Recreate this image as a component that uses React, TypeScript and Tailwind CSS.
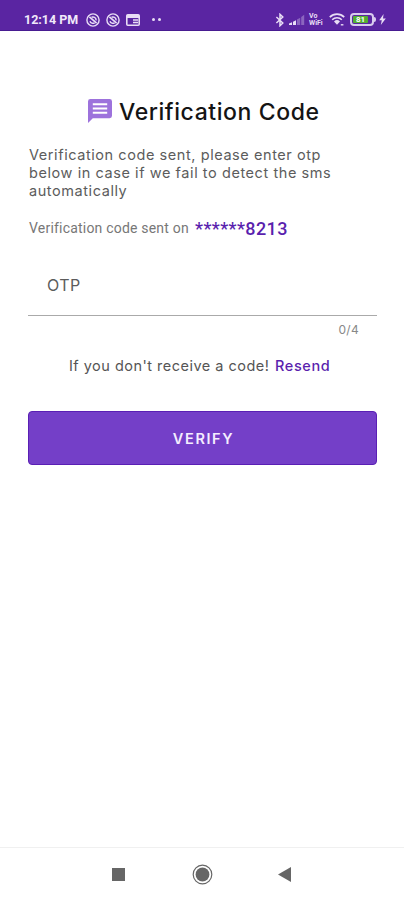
import type { ReactNode } from 'react'

const OTP_LENGTH = 4

type Props = {
  phone: string
  code: string
}

function MutedIcon() {
  return (
    <svg className="h-[14px] w-[14px]" viewBox="0 0 14 14" fill="none" stroke="currentColor" aria-hidden="true">
      <circle cx="7" cy="7" r="6.1" strokeWidth="1.4" />
      <path d="M4 8.2a3.2 3.2 0 0 0 4.6 1.7M5.6 4.2a3.2 3.2 0 0 1 4.5 3.2" strokeWidth="1.5" />
      <path d="M3.4 3.8l7.2 6.4" strokeWidth="1.7" />
    </svg>
  )
}

function NewsIcon() {
  return (
    <svg className="h-[12px] w-[14px]" viewBox="0 0 14 12" aria-hidden="true">
      <rect x=".8" y=".8" width="12.4" height="10.4" rx="1" fill="none" stroke="currentColor" strokeWidth="1.6" />
      <path d="M1 1h12v3H1z" fill="currentColor" />
      <path d="M7 5.9h5M7 8.4h5" stroke="currentColor" strokeWidth="1.5" />
    </svg>
  )
}

function BluetoothIcon() {
  return (
    <svg className="h-[14px] w-[10px]" viewBox="0 0 10 14" fill="none" stroke="currentColor" strokeWidth="1.5" aria-hidden="true">
      <path d="M1.4 4l6.4 6L5 12.7V1.3L7.8 4l-6.4 6" />
    </svg>
  )
}

function SignalIcon() {
  return (
    <svg className="h-[11px] w-[16px]" viewBox="0 0 16 11" fill="currentColor" aria-hidden="true">
      <path d="M0 11V9.4l3-1.2V11zM4 11V7.7l3-1.4V11z" />
      <path d="M8 11V5.5l3.2-1.8V11zM12.2 11V3l3-2.2V11z" opacity=".35" />
    </svg>
  )
}

function WifiIcon() {
  return (
    <svg className="h-[13px] w-[16px]" viewBox="0 0 16 13" fill="none" stroke="currentColor" aria-hidden="true">
      <path d="M.8 4.2a10.2 10.2 0 0 1 14.4 0" strokeWidth="1.7" />
      <path d="M3.2 6.8a6.8 6.8 0 0 1 9.6 0" strokeWidth="1.6" />
      <path d="M5 8.4a4.3 4.3 0 0 1 6 0l-3 3.4z" fill="currentColor" stroke="none" />
      <path d="M11.8 11.8h2.6" strokeWidth="1.4" />
    </svg>
  )
}

function BatteryIcon() {
  return (
    <span className="flex items-center">
      <span className="flex h-[13px] w-[24px] items-center rounded-[4px] border-2 border-[#d9cbee] p-px">
        <span className="flex h-full w-[15px] items-center justify-center rounded-[1px] bg-[#54ae32] font-['Roboto',sans-serif] text-[8px] leading-none font-bold text-white">
          81
        </span>
      </span>
      <span className="h-[5px] w-[2px] rounded-r-sm bg-[#d9cbee]" />
    </span>
  )
}

function StatusBar() {
  return (
    <header className="flex h-[31px] items-center border-b border-[#471c91] bg-[#5a25a2] pt-[9px] pr-[18px] pl-6 text-[#e8ddf5]">
      <span className="w-[62px] pt-px font-['Roboto',sans-serif] text-[12.5px] leading-none font-bold whitespace-nowrap text-[#f1e9fa]">
        12:14 PM
      </span>
      <div className="flex items-center gap-[6px]">
        <MutedIcon />
        <MutedIcon />
        <NewsIcon />
        <span className="ml-[6px] flex gap-[3px]">
          <span className="size-[3px] rounded-full bg-current" />
          <span className="size-[3px] rounded-full bg-current" />
        </span>
      </div>
      <div className="ml-auto flex items-center">
        <BluetoothIcon />
        <span className="ml-[4px] flex"><SignalIcon /></span>
        <span className="ml-[4px] flex w-[16px] flex-col font-['Roboto',sans-serif] text-[7px] leading-[7px] font-bold">
          <span>Vo</span>
          <span>WiFi</span>
        </span>
        <span className="ml-[4px] flex"><WifiIcon /></span>
        <span className="ml-[5px] flex"><BatteryIcon /></span>
        <svg className="ml-[3px] h-[11px] w-[7px]" viewBox="0 0 7 11" fill="currentColor" aria-hidden="true">
          <path d="M4.6 0L.2 6.2h2.6L1.8 11l5-6.4H4z" />
        </svg>
      </div>
    </header>
  )
}

function MessageIcon() {
  return (
    <svg className="h-6 w-6" viewBox="0 0 24 24" aria-hidden="true">
      <path
        fill="#9d72dc"
        fillRule="evenodd"
        d="M2.4 0h19.2A2.4 2.4 0 0 1 24 2.4v14.4a2.4 2.4 0 0 1-2.4 2.4H4.8L0 24V2.4A2.4 2.4 0 0 1 2.4 0zM4.8 4.2v2h14.4v-2zM4.8 8.5v2h14.4v-2zM4.8 12.8v2h14.4v-2z"
      />
    </svg>
  )
}

function NavButton({ label, children }: { label: string; children: ReactNode }) {
  return (
    <button type="button" aria-label={label} className="flex w-[83px] items-center justify-center">
      {children}
    </button>
  )
}

function VerificationForm({ phone, code }: Props) {
  return (
    <main className="flex-1 px-7 pt-[65px]">
      <h1 className="flex h-[30px] items-center pl-[60px]">
        <MessageIcon />
        <span className="ml-[7px] pt-[2px] text-[23px] font-medium tracking-[0.58px] whitespace-nowrap text-[#141414]">
          Verification Code
        </span>
      </h1>

      <p className="mt-[20px] pl-px text-[14.5px] leading-[18px] tracking-[0.57px] whitespace-nowrap text-[#5c5c5c]">
        Verification code sent, please enter otp
        <br />
        below in case if we fail to detect the sms
        <br />
        automatically
      </p>

      <p className="mt-[16px] flex h-6 items-center pl-px font-['Roboto',sans-serif] whitespace-nowrap">
        <span className="w-[166px] text-[14px] tracking-[0.2px] text-[#777]">Verification code sent on</span>
        <span className="text-[18px] font-medium tracking-[0.4px] text-[#5a1fae]">{phone}</span>
      </p>

      {/* OTP field */}
      <div className="mt-[15px] flex h-[61px] w-[349px] items-center border-b border-[#aaa] pl-[19px] text-[16px] tracking-[0.5px] text-[#5c5c5c]">
        {code || 'OTP'}
      </div>
      <div className="flex h-7 w-[331px] items-center justify-end text-[12px] tracking-[0.3px] text-[#888]">
        {code.length}/{OTP_LENGTH}
      </div>

      <p className="mt-[12px] flex h-5 items-center pl-[41px] text-[14.5px] tracking-[0.48px] whitespace-nowrap text-[#555]">
        <span className="w-[206px]">If you don't receive a code!</span>
        <button type="button" className="font-medium tracking-[0.6px] text-[#5a1fae]">Resend</button>
      </p>

      <button
        type="button"
        className="mt-[35px] flex h-[54px] w-[349px] items-center justify-center rounded-[4px] border border-[#5a1fb4] bg-[#743fc8] pt-px pl-[2px] text-[14.5px] font-semibold tracking-[1.6px] text-[#f4edff]"
      >
        VERIFY
      </button>
    </main>
  )
}

export default function App() {
  return (
    <div className="flex h-[900px] w-[404px] flex-col overflow-hidden bg-white font-['Inter',sans-serif]">
      <StatusBar />
      <VerificationForm phone="******8213" code="" />
      <nav className="flex h-[53px] justify-center border-t border-[#f0f0f0] pr-px">
        <NavButton label="Recent apps">
          <span className="size-[13px] bg-[#666]" />
        </NavButton>
        <NavButton label="Home">
          <svg className="ml-px size-[21px]" viewBox="0 0 21 21" aria-hidden="true">
            <circle cx="10.5" cy="10.5" r="9.3" fill="none" stroke="#666" strokeWidth="1.2" />
            <circle cx="10.5" cy="10.5" r="6.9" fill="#666" />
          </svg>
        </NavButton>
        <NavButton label="Back">
          <svg className="h-[15px] w-[13px]" viewBox="0 0 13 15" aria-hidden="true">
            <path d="M13 0v15L0 7.5z" fill="#666" />
          </svg>
        </NavButton>
      </nav>
    </div>
  )
}
